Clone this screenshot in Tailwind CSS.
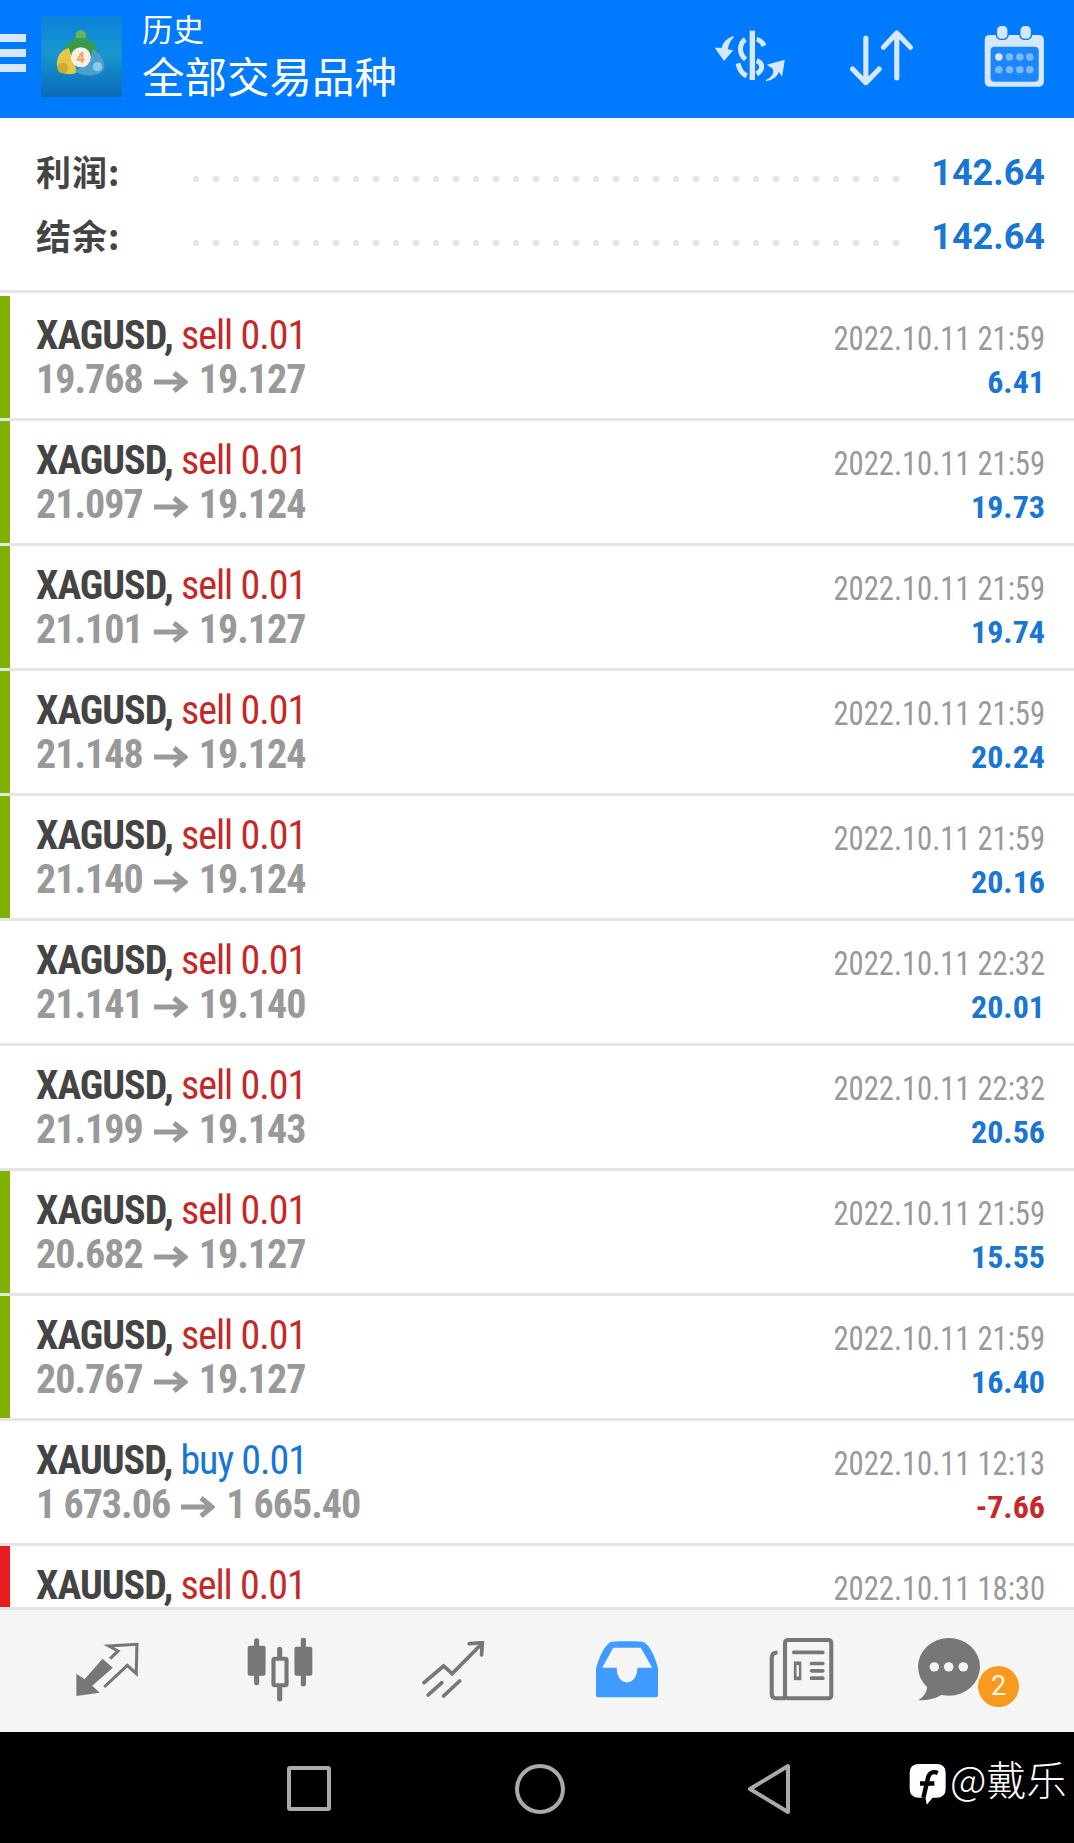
<!DOCTYPE html>
<html lang="zh">
<head>
    <meta charset="UTF-8">
    <title>历史</title>
    <script src="https://cdn.jsdelivr.net/npm/@tailwindcss/browser@4"></script>
</head>
<body class="bg-white font-['Roboto',sans-serif]">
<div class="flex flex-col w-[1074px] h-[1843px] overflow-hidden">

    <!-- header -->
    <header class="flex items-center h-[118px] shrink-0 bg-[#007aff] text-white">
        <div class="flex flex-col gap-[7px] w-[26px] -mt-[12px]">
            <div class="h-[8px] bg-[#d6e8ff]"></div>
            <div class="h-[8px] bg-[#d6e8ff]"></div>
            <div class="h-[8px] bg-[#d6e8ff]"></div>
        </div>
        <svg class="ml-[15px] -mt-[5px]" width="81" height="81" viewBox="9 6 242 243">
            <defs>
                <linearGradient id="sky" x1="0" y1="0" x2="0" y2="1">
                    <stop offset="0" stop-color="#0b82d8"/>
                    <stop offset=".45" stop-color="#1797d0"/>
                    <stop offset="1" stop-color="#0a6bb8"/>
                </linearGradient>
            </defs>
            <rect x="9" y="6" width="242" height="243" fill="url(#sky)"/>
            <circle cx="128" cy="64" r="16" fill="#63b55a"/>
            <path d="M76 122 C80 88 102 72 128 72 C155 72 176 88 180 122 L128 135 Z" fill="#3a9a4b"/>
            <path d="M56 148 C58 122 72 106 92 102 L114 165 C122 178 105 182 90 180 C68 180 56 166 56 148 Z" fill="#e4c746"/>
            <circle cx="74" cy="162" r="16" fill="#cdaa2e"/>
            <path d="M165 106 C194 122 204 150 196 168 C178 190 135 190 110 170 L150 150 Z" fill="#4a9fcf"/>
            <circle cx="178" cy="158" r="14" fill="#8accE6"/>
            <circle cx="128" cy="130" r="30" fill="#f6f0e6"/>
            <text x="128" y="146" text-anchor="middle" font-size="44" font-weight="700" fill="#eda75c">4</text>
        </svg>
        <div class="ml-[20px] -mt-[3px] font-['Roboto','Noto_Sans_CJK_SC',sans-serif]">
            <p class="text-[31px] leading-[40px]">历史</p>
            <p class="text-[42.5px] leading-[50px] mt-[3px]">全部交易品种</p>
        </div>
        <div class="flex items-center ml-auto mr-[27px]">
            <svg class="-mt-[8px]" width="72" height="60" viewBox="15 15 210 180" fill="none" stroke="#d6e8ff" stroke-width="15">
                <path d="M127 32 V180" stroke-width="16"/>
                <path d="M140 58 C150 60 158 68 162 78 M106 58 C88 70 85 100 107 118 M140 122 C160 130 160 150 140 162 M84 130 C88 148 95 160 110 168"/>
                <path d="M70 50 C50 58 38 72 38 85 L18 85 L42 120 L66 92 L52 90 C52 75 58 62 70 50 Z" fill="#d6e8ff" stroke-width="4"/>
                <path d="M168 182 C190 172 195 158 190 145 L175 135 L222 122 L215 165 L205 150 C205 165 190 178 168 182 Z" fill="#d6e8ff" stroke-width="4"/>
            </svg>
            <svg class="ml-[62px] -mt-[3px]" width="68" height="58" viewBox="910 85 198 174" preserveAspectRatio="none" fill="none" stroke="#d6e8ff" stroke-width="15" stroke-linecap="round" stroke-linejoin="round">
                <path d="M962 112 V246 M923 205 L962 246 L1001 205"/>
                <path d="M1052 232 V97 M1013 140 L1052 97 L1092 140"/>
            </svg>
            <svg class="ml-[67px] -mt-[4px]" width="64" height="64" viewBox="1303 75 186 192" preserveAspectRatio="none">
                <rect x="1308" y="105" width="172" height="155" rx="14" fill="#d6e8ff"/>
                <rect x="1325" y="140" width="140" height="105" rx="12" fill="#1c86ff"/>
                <rect x="1342" y="76" width="34" height="42" rx="14" fill="#d6e8ff" stroke="#007aff" stroke-width="4"/>
                <rect x="1410" y="76" width="34" height="42" rx="14" fill="#d6e8ff" stroke="#007aff" stroke-width="4"/>
                <g fill="#7db8ff">
                    <circle cx="1349" cy="171" r="11" fill="#d6e8ff"/><circle cx="1380" cy="171" r="11"/><circle cx="1410" cy="171" r="11"/><circle cx="1439" cy="171" r="11"/>
                    <circle cx="1349" cy="209" r="11"/><circle cx="1380" cy="209" r="11"/><circle cx="1410" cy="209" r="11"/><circle cx="1439" cy="209" r="11"/>
                </g>
            </svg>
        </div>
    </header>

    <!-- summary -->
    <section class="h-[175px] shrink-0 pl-[36px] pr-[29px] pt-[27px] border-b-[3px] border-[#e5e5e5]">
        <div class="flex items-center h-[64px]">
            <span class="w-[150px] -mt-[12px] font-['Noto_Sans_CJK_SC',sans-serif] font-bold text-[35px] tracking-[1px] text-[#444]">利润:</span>
            <div class="w-[720px] h-[8px] mt-[4px] bg-[radial-gradient(circle,#e6e6e6_3px,transparent_3.5px)] bg-[length:20px_8px]"></div>
            <span class="ml-auto -mt-[8px] font-bold text-[36px] text-[#1976d2]">142.64</span>
        </div>
        <div class="flex items-center h-[64px]">
            <span class="w-[150px] -mt-[12px] font-['Noto_Sans_CJK_SC',sans-serif] font-bold text-[35px] tracking-[1px] text-[#444]">结余:</span>
            <div class="w-[720px] h-[8px] mt-[4px] bg-[radial-gradient(circle,#e6e6e6_3px,transparent_3.5px)] bg-[length:20px_8px]"></div>
            <span class="ml-auto -mt-[8px] font-bold text-[36px] text-[#1976d2]">142.64</span>
        </div>
    </section>

    <!-- deals -->
    <section class="h-[1314px] shrink-0 overflow-hidden pt-[3px] [font-stretch:75%] whitespace-nowrap">
        <article class="flex h-[125px] border-b-[3px] border-[#e5e5e5]">
            <div class="w-[10px] bg-[#7fb000]"></div>
            <div class="flex-1 pl-[26px] pt-[18px] text-[40px] leading-[44px] tracking-[-1px]">
                <p><b class="text-[#444]">XAGUSD,</b> <span class="text-[#c62828]">sell 0.01</span></p>
                <p class="font-bold text-[#999]">19.768<svg class="inline-block mx-[11px]" width="34" height="22" viewBox="0 0 34 22" fill="none" stroke="#999" stroke-width="5"><path d="M0 11 H31 M20 2 L31 11 L20 20"/></svg>19.127</p>
            </div>
            <div class="pr-[29px] pt-[20px] text-right">
                <p class="origin-right scale-x-[.9] text-[34px] leading-[44px] text-[#999]">2022.10.11 21:59</p>
                <p class="text-[32px] leading-[44px] font-bold text-[#1976d2]">6.41</p>
            </div>
        </article>
        <article class="flex h-[125px] border-b-[3px] border-[#e5e5e5]">
            <div class="w-[10px] bg-[#7fb000]"></div>
            <div class="flex-1 pl-[26px] pt-[18px] text-[40px] leading-[44px] tracking-[-1px]">
                <p><b class="text-[#444]">XAGUSD,</b> <span class="text-[#c62828]">sell 0.01</span></p>
                <p class="font-bold text-[#999]">21.097<svg class="inline-block mx-[11px]" width="34" height="22" viewBox="0 0 34 22" fill="none" stroke="#999" stroke-width="5"><path d="M0 11 H31 M20 2 L31 11 L20 20"/></svg>19.124</p>
            </div>
            <div class="pr-[29px] pt-[20px] text-right">
                <p class="origin-right scale-x-[.9] text-[34px] leading-[44px] text-[#999]">2022.10.11 21:59</p>
                <p class="text-[32px] leading-[44px] font-bold text-[#1976d2]">19.73</p>
            </div>
        </article>
        <article class="flex h-[125px] border-b-[3px] border-[#e5e5e5]">
            <div class="w-[10px] bg-[#7fb000]"></div>
            <div class="flex-1 pl-[26px] pt-[18px] text-[40px] leading-[44px] tracking-[-1px]">
                <p><b class="text-[#444]">XAGUSD,</b> <span class="text-[#c62828]">sell 0.01</span></p>
                <p class="font-bold text-[#999]">21.101<svg class="inline-block mx-[11px]" width="34" height="22" viewBox="0 0 34 22" fill="none" stroke="#999" stroke-width="5"><path d="M0 11 H31 M20 2 L31 11 L20 20"/></svg>19.127</p>
            </div>
            <div class="pr-[29px] pt-[20px] text-right">
                <p class="origin-right scale-x-[.9] text-[34px] leading-[44px] text-[#999]">2022.10.11 21:59</p>
                <p class="text-[32px] leading-[44px] font-bold text-[#1976d2]">19.74</p>
            </div>
        </article>
        <article class="flex h-[125px] border-b-[3px] border-[#e5e5e5]">
            <div class="w-[10px] bg-[#7fb000]"></div>
            <div class="flex-1 pl-[26px] pt-[18px] text-[40px] leading-[44px] tracking-[-1px]">
                <p><b class="text-[#444]">XAGUSD,</b> <span class="text-[#c62828]">sell 0.01</span></p>
                <p class="font-bold text-[#999]">21.148<svg class="inline-block mx-[11px]" width="34" height="22" viewBox="0 0 34 22" fill="none" stroke="#999" stroke-width="5"><path d="M0 11 H31 M20 2 L31 11 L20 20"/></svg>19.124</p>
            </div>
            <div class="pr-[29px] pt-[20px] text-right">
                <p class="origin-right scale-x-[.9] text-[34px] leading-[44px] text-[#999]">2022.10.11 21:59</p>
                <p class="text-[32px] leading-[44px] font-bold text-[#1976d2]">20.24</p>
            </div>
        </article>
        <article class="flex h-[125px] border-b-[3px] border-[#e5e5e5]">
            <div class="w-[10px] bg-[#7fb000]"></div>
            <div class="flex-1 pl-[26px] pt-[18px] text-[40px] leading-[44px] tracking-[-1px]">
                <p><b class="text-[#444]">XAGUSD,</b> <span class="text-[#c62828]">sell 0.01</span></p>
                <p class="font-bold text-[#999]">21.140<svg class="inline-block mx-[11px]" width="34" height="22" viewBox="0 0 34 22" fill="none" stroke="#999" stroke-width="5"><path d="M0 11 H31 M20 2 L31 11 L20 20"/></svg>19.124</p>
            </div>
            <div class="pr-[29px] pt-[20px] text-right">
                <p class="origin-right scale-x-[.9] text-[34px] leading-[44px] text-[#999]">2022.10.11 21:59</p>
                <p class="text-[32px] leading-[44px] font-bold text-[#1976d2]">20.16</p>
            </div>
        </article>
        <article class="flex h-[125px] border-b-[3px] border-[#e5e5e5]">
            <div class="w-[10px]"></div>
            <div class="flex-1 pl-[26px] pt-[18px] text-[40px] leading-[44px] tracking-[-1px]">
                <p><b class="text-[#444]">XAGUSD,</b> <span class="text-[#c62828]">sell 0.01</span></p>
                <p class="font-bold text-[#999]">21.141<svg class="inline-block mx-[11px]" width="34" height="22" viewBox="0 0 34 22" fill="none" stroke="#999" stroke-width="5"><path d="M0 11 H31 M20 2 L31 11 L20 20"/></svg>19.140</p>
            </div>
            <div class="pr-[29px] pt-[20px] text-right">
                <p class="origin-right scale-x-[.9] text-[34px] leading-[44px] text-[#999]">2022.10.11 22:32</p>
                <p class="text-[32px] leading-[44px] font-bold text-[#1976d2]">20.01</p>
            </div>
        </article>
        <article class="flex h-[125px] border-b-[3px] border-[#e5e5e5]">
            <div class="w-[10px]"></div>
            <div class="flex-1 pl-[26px] pt-[18px] text-[40px] leading-[44px] tracking-[-1px]">
                <p><b class="text-[#444]">XAGUSD,</b> <span class="text-[#c62828]">sell 0.01</span></p>
                <p class="font-bold text-[#999]">21.199<svg class="inline-block mx-[11px]" width="34" height="22" viewBox="0 0 34 22" fill="none" stroke="#999" stroke-width="5"><path d="M0 11 H31 M20 2 L31 11 L20 20"/></svg>19.143</p>
            </div>
            <div class="pr-[29px] pt-[20px] text-right">
                <p class="origin-right scale-x-[.9] text-[34px] leading-[44px] text-[#999]">2022.10.11 22:32</p>
                <p class="text-[32px] leading-[44px] font-bold text-[#1976d2]">20.56</p>
            </div>
        </article>
        <article class="flex h-[125px] border-b-[3px] border-[#e5e5e5]">
            <div class="w-[10px] bg-[#7fb000]"></div>
            <div class="flex-1 pl-[26px] pt-[18px] text-[40px] leading-[44px] tracking-[-1px]">
                <p><b class="text-[#444]">XAGUSD,</b> <span class="text-[#c62828]">sell 0.01</span></p>
                <p class="font-bold text-[#999]">20.682<svg class="inline-block mx-[11px]" width="34" height="22" viewBox="0 0 34 22" fill="none" stroke="#999" stroke-width="5"><path d="M0 11 H31 M20 2 L31 11 L20 20"/></svg>19.127</p>
            </div>
            <div class="pr-[29px] pt-[20px] text-right">
                <p class="origin-right scale-x-[.9] text-[34px] leading-[44px] text-[#999]">2022.10.11 21:59</p>
                <p class="text-[32px] leading-[44px] font-bold text-[#1976d2]">15.55</p>
            </div>
        </article>
        <article class="flex h-[125px] border-b-[3px] border-[#e5e5e5]">
            <div class="w-[10px] bg-[#7fb000]"></div>
            <div class="flex-1 pl-[26px] pt-[18px] text-[40px] leading-[44px] tracking-[-1px]">
                <p><b class="text-[#444]">XAGUSD,</b> <span class="text-[#c62828]">sell 0.01</span></p>
                <p class="font-bold text-[#999]">20.767<svg class="inline-block mx-[11px]" width="34" height="22" viewBox="0 0 34 22" fill="none" stroke="#999" stroke-width="5"><path d="M0 11 H31 M20 2 L31 11 L20 20"/></svg>19.127</p>
            </div>
            <div class="pr-[29px] pt-[20px] text-right">
                <p class="origin-right scale-x-[.9] text-[34px] leading-[44px] text-[#999]">2022.10.11 21:59</p>
                <p class="text-[32px] leading-[44px] font-bold text-[#1976d2]">16.40</p>
            </div>
        </article>
        <article class="flex h-[125px] border-b-[3px] border-[#e5e5e5]">
            <div class="w-[10px]"></div>
            <div class="flex-1 pl-[26px] pt-[18px] text-[40px] leading-[44px] tracking-[-1px]">
                <p><b class="text-[#444]">XAUUSD,</b> <span class="text-[#1976d2]">buy 0.01</span></p>
                <p class="font-bold text-[#999]">1 673.06<svg class="inline-block mx-[11px]" width="34" height="22" viewBox="0 0 34 22" fill="none" stroke="#999" stroke-width="5"><path d="M0 11 H31 M20 2 L31 11 L20 20"/></svg>1 665.40</p>
            </div>
            <div class="pr-[29px] pt-[20px] text-right">
                <p class="origin-right scale-x-[.9] text-[34px] leading-[44px] text-[#999]">2022.10.11 12:13</p>
                <p class="text-[32px] leading-[44px] font-bold text-[#c62828]">-7.66</p>
            </div>
        </article>
        <article class="flex h-[125px]">
            <div class="w-[10px] bg-[#e81c1c]"></div>
            <div class="flex-1 pl-[26px] pt-[18px] text-[40px] leading-[44px] tracking-[-1px]">
                <p><b class="text-[#444]">XAUUSD,</b> <span class="text-[#c62828]">sell 0.01</span></p>
            </div>
            <div class="pr-[29px] pt-[20px] text-right">
                <p class="origin-right scale-x-[.9] text-[34px] leading-[44px] text-[#999]">2022.10.11 18:30</p>
            </div>
        </article>
    </section>

    <!-- bottom tabs -->
    <nav class="flex items-center h-[125px] shrink-0 pb-[3px] bg-[#f5f5f5] border-t-[3px] border-[#e5e5e5]">
        <svg class="ml-[75px]" width="64" height="56" viewBox="220 335 186 168" preserveAspectRatio="none">
            <path d="M224 430 V497 L292 487 L270 466 L330 412 L300 385 L248 447 Z" fill="#777"/>
            <path d="M322 385 L345 362 L318 347 L400 342 L398 430 L372 405 L305 470" fill="none" stroke="#777" stroke-width="9"/>
        </svg>
        <svg class="ml-[108px]" width="66" height="64" viewBox="722 322 192 192" preserveAspectRatio="none">
            <rect x="724" y="345" width="52" height="90" rx="6" fill="#777"/>
            <path d="M750 330 V456 M886 328 V460 M817 356 V378 M817 470 V505" stroke="#777" stroke-width="15" stroke-linecap="round"/>
            <rect x="799" y="384" width="38" height="80" rx="3" fill="none" stroke="#777" stroke-width="12"/>
            <rect x="860" y="348" width="52" height="87" rx="6" fill="#777"/>
        </svg>
        <svg class="ml-[109px]" width="63" height="58" viewBox="1232 330 184 174" preserveAspectRatio="none" fill="none" stroke="#777" stroke-width="11" stroke-linecap="round">
            <path d="M1238 455 L1295 405 L1320 428 L1405 340"/>
            <path d="M1370 338 L1408 335 L1406 372"/>
            <path d="M1250 492 L1290 455 M1295 495 L1342 450"/>
        </svg>
        <svg class="ml-[111px]" width="62" height="57" viewBox="172 330 180 170" preserveAspectRatio="none">
            <path d="M172 412 C180 380 195 345 215 333 C220 330 305 330 310 333 C330 345 345 380 352 412 V490 Q352 498 344 498 H180 Q172 498 172 490 Z" fill="#3f9bff"/>
            <path d="M190 410 L222 350 H302 L335 410 H292 C292 468 232 468 232 410 Z" fill="#f5f5f5"/>
        </svg>
        <svg class="ml-[110px]" width="66" height="63" viewBox="674 322 194 188" preserveAspectRatio="none">
            <rect x="724" y="328" width="136" height="174" rx="8" fill="none" stroke="#777" stroke-width="12"/>
            <path d="M702 365 Q685 365 685 380 V490 Q685 502 700 502 H724" fill="none" stroke="#777" stroke-width="12"/>
            <path d="M750 365 H835 M802 398 H835 M802 420 H835 M802 442 H835" stroke="#777" stroke-width="11" stroke-linecap="round"/>
            <rect x="750" y="392" width="22" height="56" fill="#777"/>
            <rect x="758" y="403" width="7" height="34" fill="#f5f5f5"/>
        </svg>
        <div class="relative ml-[84px]">
            <svg class="block" width="62" height="63" viewBox="1112 322 182 188" preserveAspectRatio="none">
                <ellipse cx="1203" cy="408" rx="91" ry="86" fill="#777"/>
                <path d="M1140 460 C1140 480 1130 498 1113 507 C1145 510 1175 500 1190 485 Z" fill="#777"/>
                <circle cx="1160" cy="408" r="14" fill="#f5f5f5"/><circle cx="1202" cy="408" r="14" fill="#f5f5f5"/><circle cx="1245" cy="408" r="14" fill="#f5f5f5"/>
            </svg>
            <span class="absolute left-[60px] top-[28px] flex items-center justify-center w-[41px] h-[41px] rounded-full bg-[#f79a1f] text-white/90 text-[27px]">2</span>
        </div>
    </nav>

    <!-- android bar -->
    <footer class="flex items-center h-[111px] shrink-0 bg-black">
        <div class="ml-[287px] mt-[2px] w-[44px] h-[45px] rounded-[3px] border-[4px] border-[#aaa]"></div>
        <div class="ml-[184px] mt-[2px] w-[50px] h-[50px] rounded-full border-[4px] border-[#aaa]"></div>
        <svg class="ml-[182px] mt-[2px]" width="45" height="52" viewBox="0 0 45 52" fill="none" stroke="#aaa" stroke-width="4" stroke-linejoin="round">
            <path d="M41 3 V49 L3 26 Z"/>
        </svg>
        <svg class="ml-[117px] -mt-[6px]" width="37" height="43" viewBox="1086 700 108 130" preserveAspectRatio="none">
            <path d="M1115 703 H1166 Q1193 703 1193 730 V778 Q1193 805 1166 805 H1155 L1138 826 L1134 805 H1115 Q1088 805 1088 778 V730 Q1088 703 1115 703 Z" fill="#fff"/>
            <path d="M1170 730 C1150 722 1142 735 1140 752 L1128 805 M1118 762 H1160" fill="none" stroke="#000" stroke-width="13"/>
        </svg>
        <span class="ml-[4px] -mt-[20px] text-white text-[40px] font-['Noto_Sans_CJK_SC',sans-serif] font-light whitespace-nowrap">@戴乐</span>
    </footer>
</div>
</body>
</html>
